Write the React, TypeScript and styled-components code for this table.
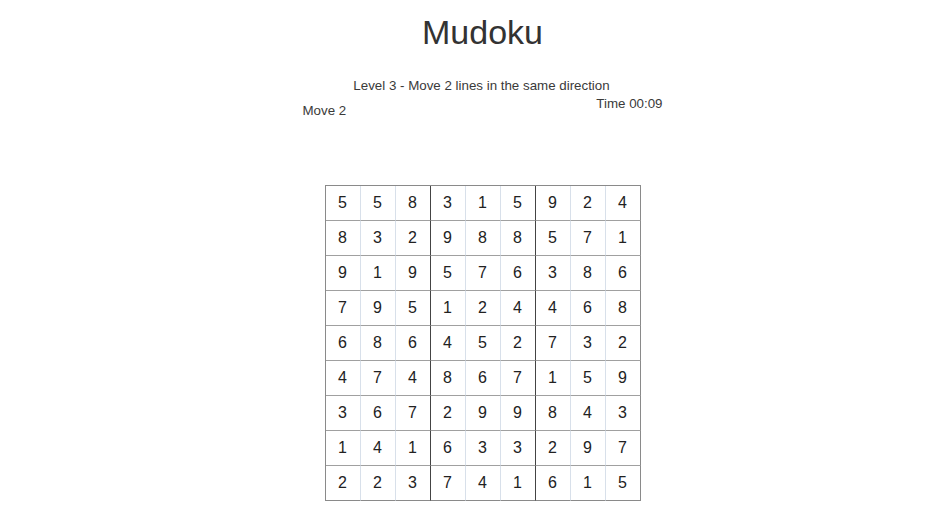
import React from "react";
import styled, { createGlobalStyle } from "styled-components";

const Global = createGlobalStyle`
  html, body { margin: 0; padding: 0; background: #ffffff; }
  body { font-family: "Liberation Sans", Arial, sans-serif; color: #333; }
`;

const Page = styled.div`
  width: 940px;
  box-sizing: border-box;
  padding: 13px 0 0 25px;
  display: flex;
  flex-direction: column;
  align-items: center;
`;

const Title = styled.h1`
  margin: 0;
  font-size: 34px;
  font-weight: 400;
  line-height: 39px;
  color: #333;
`;

const Subtitle = styled.div`
  margin-top: 26px;
  margin-right: 2px;
  font-size: 13.33px;
  line-height: 15px;
  color: #3a3a3a;
`;

const InfoRow = styled.div`
  width: 360px;
  margin-top: 3px;
  display: flex;
  justify-content: space-between;
  align-items: flex-start;
  font-size: 13.33px;
  line-height: 15px;
  color: #3a3a3a;
`;

const Move = styled.span`
  margin-top: 7px;
`;

const Time = styled.span``;

const Board = styled.div`
  margin-top: 67px;
  display: grid;
  grid-template-columns: repeat(9, 35px);
  grid-auto-rows: 35px;
  border-left: 1px solid #8a8a8a;
  border-top: 1px solid #8a8a8a;
`;

const Cell = styled.div<{ $col: number; $row: number }>`
  box-sizing: border-box;
  display: flex;
  align-items: center;
  justify-content: center;
  font-size: 16px;
  color: #222;
  border-bottom: 1px solid ${(p) => (p.$row === 8 ? "#8a8a8a" : "#a0a0a0")};
  border-right: 1px solid
    ${(p) =>
      p.$col === 8 ? "#8a8a8a" : p.$col === 2 || p.$col === 5 ? "#444" : "#d8e0ea"};
`;

const grid = [
  [5, 5, 8, 3, 1, 5, 9, 2, 4],
  [8, 3, 2, 9, 8, 8, 5, 7, 1],
  [9, 1, 9, 5, 7, 6, 3, 8, 6],
  [7, 9, 5, 1, 2, 4, 4, 6, 8],
  [6, 8, 6, 4, 5, 2, 7, 3, 2],
  [4, 7, 4, 8, 6, 7, 1, 5, 9],
  [3, 6, 7, 2, 9, 9, 8, 4, 3],
  [1, 4, 1, 6, 3, 3, 2, 9, 7],
  [2, 2, 3, 7, 4, 1, 6, 1, 5],
];

export default function App() {
  return (
    <>
      <Global />
      <Page>
        <Title>Mudoku</Title>
        <Subtitle>Level 3 - Move 2 lines in the same direction</Subtitle>
        <InfoRow>
          <Move>Move 2</Move>
          <Time>Time 00:09</Time>
        </InfoRow>
        <Board>
          {grid.map((row, r) =>
            row.map((v, c) => (
              <Cell key={`${r}-${c}`} $row={r} $col={c}>
                {v}
              </Cell>
            ))
          )}
        </Board>
      </Page>
    </>
  );
}
